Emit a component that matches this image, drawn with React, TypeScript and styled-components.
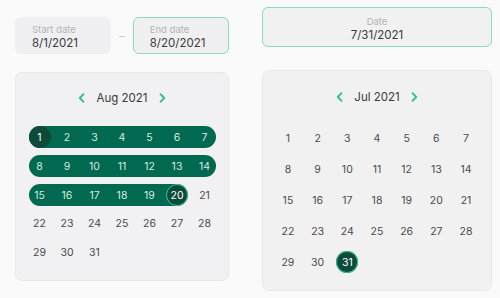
import styled, { createGlobalStyle, css } from "styled-components";

const GlobalStyle = createGlobalStyle`
  html, body {
    margin: 0;
    padding: 0;
    background: #fafafa;
    font-family: Inter, "Noto Sans", sans-serif;
  }
`;

type Layout = {
  cols: number;
  colGap: number;
  rowGap: number;
};

const ChevronLeft = () => (
  <svg width="7" height="10" viewBox="0 0 7 10">
    <path d="M5.5 1.2 L1.8 5 L5.5 8.8" fill="none" stroke="#2bbf8c" strokeWidth="1.8" strokeLinecap="round" strokeLinejoin="round" />
  </svg>
);

const ChevronRight = () => (
  <svg width="7" height="10" viewBox="0 0 7 10">
    <path d="M1.5 1.2 L5.2 5 L1.5 8.8" fill="none" stroke="#2bbf8c" strokeWidth="1.8" strokeLinecap="round" strokeLinejoin="round" />
  </svg>
);

type CalendarProps = {
  month: string;
  days: number;
  rangeStart?: number;
  rangeEnd: number;
  layout: Layout;
};

const Calendar = ({ month, days, rangeStart, rangeEnd, layout }: CalendarProps) => {
  const list = Array.from({ length: days }, (_, i) => i + 1);
  return (
    <Panel>
      <Header>
        <NavButton>
          <ChevronLeft />
        </NavButton>
        <MonthLabel>{month}</MonthLabel>
        <NavButton>
          <ChevronRight />
        </NavButton>
      </Header>
      <DayGrid $colGap={layout.colGap} $rowGap={layout.rowGap}>
        {list.map((d) => {
          const col = (d - 1) % 7;
          const inRange = rangeStart !== undefined && d >= rangeStart && d <= rangeEnd;
          const selected = d === rangeStart || d === rangeEnd;
          const roundLeft = d === rangeStart || col === 0;
          const roundRight = d === rangeEnd || col === 6;
          return (
            <DayCell
              key={d}
              $inRange={inRange}
              $roundLeft={roundLeft}
              $roundRight={roundRight}
              $gap={layout.colGap}
            >
              <DayNumber $inRange={inRange} $selected={selected} $ring={d === rangeEnd}>
                {d}
              </DayNumber>
            </DayCell>
          );
        })}
      </DayGrid>
    </Panel>
  );
};

const App = () => {
  return (
    <>
      <GlobalStyle />
      <Page>
        <RangeColumn>
          <InputRow>
            <DateField>
              <FieldLabel>Start date</FieldLabel>
              <FieldValue>8/1/2021</FieldValue>
            </DateField>
            <Dash>–</Dash>
            <DateField $active>
              <FieldLabel>End date</FieldLabel>
              <FieldValue>8/20/2021</FieldValue>
            </DateField>
          </InputRow>
          <Calendar
            month="Aug 2021"
            days={31}
            rangeStart={1}
            rangeEnd={20}
            layout={{ cols: 7, colGap: 5.5, rowGap: 6.8 }}
          />
        </RangeColumn>
        <SingleColumn>
          <SingleField>
            <FieldLabel>Date</FieldLabel>
            <FieldValue>7/31/2021</FieldValue>
          </SingleField>
          <Calendar
            month="Jul 2021"
            days={31}
            rangeStart={31}
            rangeEnd={31}
            layout={{ cols: 7, colGap: 7.7, rowGap: 9 }}
          />
        </SingleColumn>
      </Page>
    </>
  );
};

export default App;

const Page = styled.main`
  width: 500px;
  height: 298px;
  display: flex;
  align-items: center;
  box-sizing: border-box;
  padding: 0 8px 0 15px;
  gap: 33px;
`;

const RangeColumn = styled.section`
  width: 214px;
  display: flex;
  flex-direction: column;
  gap: 18px;
`;

const SingleColumn = styled.section`
  width: 230px;
  display: flex;
  flex-direction: column;
  gap: 23px;
`;

const InputRow = styled.div`
  display: flex;
  align-items: center;
  gap: 8px;
`;

const DateField = styled.div<{ $active?: boolean }>`
  flex: 1;
  height: 37px;
  box-sizing: border-box;
  border-radius: 6px;
  background: #f0eff1;
  border: 1px solid ${(p) => (p.$active ? "#86dcbd" : "transparent")};
  padding: 5px 0 0 16px;
  display: flex;
  flex-direction: column;
`;

const SingleField = styled.div`
  height: 40px;
  box-sizing: border-box;
  border-radius: 6px;
  background: #f1f1f1;
  border: 1px solid #86dcbd;
  padding: 7px 0 0;
  display: flex;
  flex-direction: column;
  align-items: center;
`;

const FieldLabel = styled.span`
  font-size: 9.5px;
  line-height: 13px;
  color: #b3b3b6;
`;

const FieldValue = styled.span`
  font-size: 11.5px;
  line-height: 15px;
  color: #3a3a3c;
`;

const Dash = styled.span`
  font-size: 11px;
  color: #c4c4c6;
`;

const Panel = styled.div`
  box-sizing: border-box;
  background: #f1f0f2;
  border: 1px solid #e8e7ea;
  border-radius: 7px;
  padding: 15px 13px 16px 13px;
  display: flex;
  flex-direction: column;
  align-items: center;
  gap: 18px;

  ${SingleColumn} & {
    background: #f1f1f1;
    border-color: #e9e9e9;
    padding: 16px 14px 17px 14px;
    gap: 20px;
  }
`;

const Header = styled.div`
  height: 20px;
  display: flex;
  align-items: center;
  gap: 11px;
`;

const NavButton = styled.span`
  display: flex;
  align-items: center;
  justify-content: center;
  width: 8px;
  height: 20px;
`;

const MonthLabel = styled.span`
  font-size: 11.5px;
  color: #3a3a3c;
`;

const DayGrid = styled.div<{ $colGap: number; $rowGap: number }>`
  display: grid;
  grid-template-columns: repeat(7, 22px);
  grid-auto-rows: 22px;
  column-gap: ${(p) => p.$colGap}px;
  row-gap: ${(p) => p.$rowGap}px;
`;

const DayCell = styled.div<{
  $inRange: boolean;
  $roundLeft: boolean;
  $roundRight: boolean;
  $gap: number;
}>`
  display: flex;
  align-items: center;
  justify-content: center;
  ${(p) =>
    p.$inRange &&
    css`
      background: #00694f;
      border-radius: ${p.$roundLeft ? "11px" : "0"} ${p.$roundRight ? "11px" : "0"}
        ${p.$roundRight ? "11px" : "0"} ${p.$roundLeft ? "11px" : "0"};
      ${!p.$roundRight && `box-shadow: ${p.$gap + 0.5}px 0 0 0 #00694f;`}
    `}
`;

const DayNumber = styled.span<{ $inRange: boolean; $selected: boolean; $ring: boolean }>`
  width: 22px;
  height: 22px;
  box-sizing: border-box;
  border-radius: 50%;
  display: flex;
  align-items: center;
  justify-content: center;
  font-size: 10.5px;
  color: ${(p) => (p.$inRange ? "#d5ebe3" : "#4a4a4c")};
  ${(p) =>
    p.$selected &&
    css`
      background: #0e4a3a;
      color: #ffffff;
      border: ${p.$ring ? "1.5px solid #2ccb92" : "none"};
    `}
`;
